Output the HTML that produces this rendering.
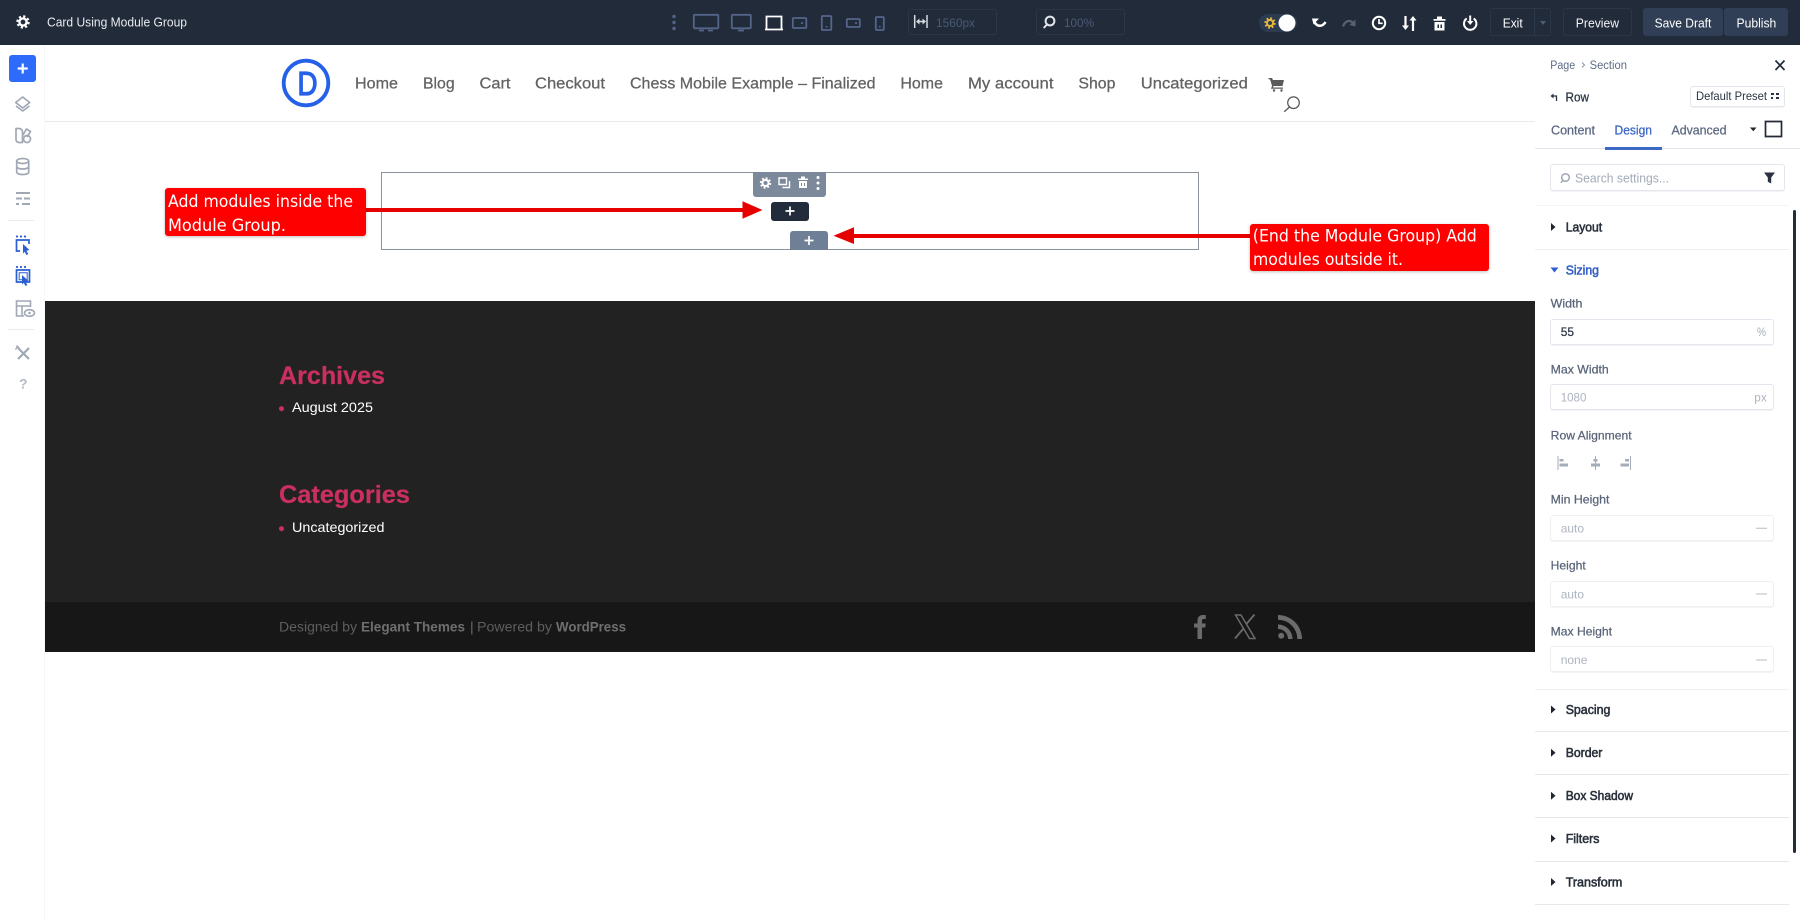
<!DOCTYPE html>
<html lang="en"><head><meta charset="utf-8"><title>Card Using Module Group</title>
<style>
html,body{margin:0;padding:0;width:1800px;height:920px;overflow:hidden;background:#fff;font-family:"Liberation Sans",sans-serif}
.b{position:absolute;box-sizing:border-box}
svg{position:absolute;left:0;top:0}
text{font-family:"Liberation Sans",sans-serif}
.m{stroke:currentColor;stroke-width:.25}
.s{stroke:currentColor;stroke-width:.55}
.inp{background:#fff;border:1px solid #e3e7ed;border-radius:3px;box-shadow:0 1px 1px rgba(30,40,60,.06)}
.lt{border-color:#eef0f3}
.dv{background:#e5e8ec;height:1px;left:1535px;width:254px}
.red{background:#f00;border-radius:3px;box-shadow:0 1px 3px rgba(0,0,0,.25)}
</style></head><body>
<div class="b" style="left:0;top:0;width:1800px;height:45px;background:#212b39"></div>
<div class="b" style="left:45px;top:121px;width:1491px;height:1px;background:#e9e9ea"></div>
<div class="b" style="left:44px;top:45px;width:1px;height:875px;background:#f6f7f8"></div>
<div class="b" style="left:45px;top:301px;width:1491px;height:301px;background:#222223"></div>
<div class="b" style="left:45px;top:602px;width:1491px;height:50px;background:#171717"></div>

<div class="b" style="left:908px;top:9px;width:89px;height:26px;border:1px solid #2b3747;border-radius:3px"></div>
<div class="b" style="left:1036px;top:9px;width:89px;height:26px;border:1px solid #2b3747;border-radius:3px"></div>
<div class="b" style="left:1259px;top:14px;width:38px;height:18px;border-radius:9px;background:#2d3b50"></div>
<div class="b" style="left:1490px;top:8px;width:61px;height:28px;border:1px solid #2b3747;border-radius:3px"></div>
<div class="b" style="left:1534px;top:8px;width:1px;height:28px;background:#2e3a4b"></div>
<div class="b" style="left:1563px;top:8px;width:69px;height:28px;border:1px solid #2b3747;border-radius:3px"></div>
<div class="b" style="left:1643px;top:8px;width:80px;height:28px;background:#303f55;border-radius:3px"></div>
<div class="b" style="left:1724px;top:8px;width:64px;height:28px;background:#303f55;border-radius:3px"></div>

<div class="b" style="left:9px;top:55px;width:27px;height:27px;background:#2f6bfb;border-radius:3px"></div>
<div class="b" style="left:8px;top:220px;width:26px;height:1px;background:#e8eaed"></div>
<div class="b" style="left:8px;top:329px;width:26px;height:1px;background:#e8eaed"></div>

<div class="b" style="left:381px;top:172px;width:818px;height:78px;border:1.5px solid #8b9299"></div>
<div class="b" style="left:753px;top:172px;width:73px;height:25px;background:#7b899b;border-radius:0 0 3px 3px"></div>
<div class="b" style="left:771px;top:202px;width:38px;height:19px;background:#222c3a;border-radius:3px"></div>
<div class="b" style="left:790px;top:231px;width:38px;height:19px;background:#6f7f95;border-radius:3px 3px 0 0"></div>
<div class="b" style="left:366px;top:208px;width:377px;height:4px;background:#e60000"></div>
<div class="b" style="left:853px;top:234px;width:398px;height:4px;background:#e60000"></div>
<div class="b red" style="left:165px;top:188px;width:201px;height:48px"></div>
<div class="b red" style="left:1250px;top:224px;width:239px;height:47px"></div>

<div class="b" style="left:1535px;top:45px;width:265px;height:875px;background:#fff"></div>
<div class="b" style="left:1535px;top:148px;width:265px;height:1px;background:#e2e6ec"></div>
<div class="b" style="left:1605px;top:147px;width:57px;height:2.500px;background:#3c68c6"></div>
<div class="b inp" style="left:1690px;top:86px;width:95px;height:21px"></div>
<div class="b inp" style="left:1550px;top:164px;width:235px;height:27px"></div>
<div class="b" style="left:1535px;top:205px;width:254px;height:1px;background:#f3f4f6"></div>
<div class="b dv" style="top:249px;background:#eceef1"></div>
<div class="b dv" style="top:689px;background:#f0f1f3"></div>
<div class="b dv" style="top:731px"></div>
<div class="b dv" style="top:774px"></div>
<div class="b dv" style="top:817px"></div>
<div class="b dv" style="top:861px"></div>
<div class="b dv" style="top:904px"></div>
<div class="b" style="left:1793px;top:210px;width:3px;height:643px;background:#232d3b;border-radius:2px"></div>
<div class="b inp" style="left:1550px;top:319px;width:224px;height:26px"></div>
<div class="b inp" style="left:1550px;top:384px;width:224px;height:26px"></div>
<div class="b inp lt" style="left:1550px;top:515px;width:224px;height:26px"></div>
<div class="b inp lt" style="left:1550px;top:581px;width:224px;height:26px"></div>
<div class="b inp lt" style="left:1550px;top:646px;width:224px;height:26px"></div>

<svg width="1800" height="920" viewBox="0 0 1800 920" xmlns="http://www.w3.org/2000/svg">
<defs>
<g id="gear"><circle r="3.6" fill="none" stroke="currentColor" stroke-width="2.4"/><circle r="5.6" fill="none" stroke="currentColor" stroke-width="2.2" stroke-dasharray="2.2 2.2"/></g>
<path id="tr" d="M0-4 4.500 0 0 4z" fill="#20262f"/>
</defs>

<!-- top bar -->
<use href="#gear" x="23" y="22" color="#fff"/>
<text x="47" y="26.500" font-size="12.500" fill="#e8ebef" textLength="140" lengthAdjust="spacingAndGlyphs">Card Using Module Group</text>
<g fill="#55658a"><circle cx="674" cy="16.500" r="1.700"/><circle cx="674" cy="22.500" r="1.700"/><circle cx="674" cy="28.500" r="1.700"/></g>
<g fill="none" stroke="#55658a" stroke-width="1.800">
<rect x="693.800" y="14.800" width="24.500" height="13.500" rx="1"/><path d="M699 30.500h5M708 30.500h5"/>
<rect x="731.800" y="14.800" width="19" height="13.500" rx="1"/><path d="M738 30.500h6"/>
<rect x="792.800" y="18" width="13.500" height="10" rx="1"/><path d="M802 22v2"/>
<rect x="821.800" y="16" width="9.500" height="14" rx="1"/><path d="M826.500 26v1.500"/>
<rect x="846.800" y="19" width="13" height="8" rx="1"/><path d="M856 22v2"/>
<rect x="875.800" y="17" width="8" height="13" rx="1"/><path d="M879.700 26v1.500"/>
</g>
<path d="M766.500 16.500h15v13h-15zM765 29.500h18" fill="none" stroke="#fff" stroke-width="1.800"/>
<g fill="none" stroke="#d5dae2" stroke-width="1.500"><path d="M914.700 15v13M927 15v13"/><path d="M917 21.500h8"/></g><path d="M916 21.500l3.500-3v6zM926 21.500l-3.500-3v6z" fill="#d5dae2"/>
<text x="936" y="27" font-size="12" fill="#4b5a75" textLength="39" lengthAdjust="spacingAndGlyphs">1560px</text>
<circle cx="1050" cy="21" r="4.400" fill="none" stroke="#e2e5ea" stroke-width="2"/><path d="M1047 24.500l-3.300 3.500" stroke="#e2e5ea" stroke-width="2"/>
<text x="1064" y="27" font-size="12" fill="#4b5a75" textLength="30" lengthAdjust="spacingAndGlyphs">100%</text>
<use href="#gear" transform="translate(1270 23) scale(.85)" color="#e5b73d"/>
<circle cx="1287" cy="23" r="8.500" fill="#fff"/>
<path d="M1314 21.500c2 3.500 4.500 5 7.500 4 1.800-.6 3-1.800 4-3.500" fill="none" stroke="#fff" stroke-width="2.500"/><path d="M1312 18.500h7l-5.500 6z" fill="#fff"/>
<path d="M1343 26.500c1-3.500 3.500-5.500 6-5.500 2.200 0 3.500 1 5 3" fill="none" stroke="#566273" stroke-width="2.300"/><path d="M1355.500 19.500v7l-6-1.500z" fill="#566273"/>
<circle cx="1379" cy="23" r="6.200" fill="none" stroke="#fff" stroke-width="2"/><path d="M1379 19v4.300h3.700" fill="none" stroke="#fff" stroke-width="1.700"/>
<path d="M1405.500 16v11M1413 19v12" stroke="#fff" stroke-width="2.200"/><path d="M1402 25.500h7l-3.500 4.500zM1409.500 20.500h7l-3.500-4.500z" fill="#fff"/>
<path d="M1433.500 19h12v1.800h-12zM1437 16.500h5v2.500h-5zM1434.500 22h10v8.500h-10z" fill="#fff"/><path d="M1437.500 24.500h1.500v3.500h-1.500zM1440.500 24.500h1.500v3.500h-1.500z" fill="#212b39"/>
<path d="M1466.700 18.500a6.200 6.200 0 1 0 7 0" fill="none" stroke="#fff" stroke-width="2"/><path d="M1470.200 15.500v7" stroke="#fff" stroke-width="2"/><path d="M1467 21h6.400l-3.200 4z" fill="#fff"/>
<text x="1502.700" y="27.500" font-size="12.500" fill="#fff" textLength="20" lengthAdjust="spacingAndGlyphs">Exit</text>
<path d="M1540 21h6l-3 4z" fill="#4d5d75"/>
<text x="1575.800" y="27.500" font-size="12.500" fill="#f2f4f7" textLength="43.200" lengthAdjust="spacingAndGlyphs">Preview</text>
<text x="1654.600" y="27.500" font-size="12.500" fill="#fff" textLength="56.700" lengthAdjust="spacingAndGlyphs">Save Draft</text>
<text x="1736.500" y="27.500" font-size="12.500" fill="#fff" textLength="39.800" lengthAdjust="spacingAndGlyphs">Publish</text>

<!-- sidebar -->
<path d="M22.700 63.500v10M17.700 68.500h10" stroke="#fff" stroke-width="2.200"/>
<g fill="none" stroke="#a0a8b5" stroke-width="1.700" stroke-linejoin="round">
<path d="M22.700 97l7 5.500-7 5.500-7-5.500z"/><path d="M16 106l6.700 5 6.700-5"/>
<path d="M16 128.500h3a3.500 3.500 0 0 1 3.500 3.500v10.500h-3.500a3 3 0 0 1-3-3z"/><path d="M23 135l3.500-6 4 2.500-3.500 5.500"/><circle cx="27" cy="139" r="3.500"/>
<ellipse cx="22.700" cy="161" rx="6" ry="2.500"/><path d="M16.700 161v11c0 1.500 2.700 2.500 6 2.500s6-1 6-2.500v-11M16.700 166.500c0 1.500 2.700 2.500 6 2.500s6-1 6-2.500"/>
</g>
<g stroke="#a0a8b5" stroke-width="1.900"><path d="M16 193h14M16 198.500h6M24 198.500h6M16 204h3M22 204h8"/></g>
<g fill="none" stroke="#2b5fd0" stroke-width="1.700">
<path d="M24 240h-7.500v11h3.500M24 240h5v4"/>
<path d="M16.500 270h13v12h-13z" stroke-width="1.700"/><path d="M19.200 272.700h8v7h-8z" stroke-width="1"/>
</g>
<g fill="#2b5fd0"><circle cx="17" cy="236.500" r="1.100"/><circle cx="21" cy="236.500" r="1.100"/><circle cx="25" cy="236.500" r="1.100"/><path d="M23 244l6.500 6-3 .8 1.800 3.200-1.800 1-1.800-3.200-1.700 1.700z"/>
<circle cx="17" cy="267" r="1.100"/><circle cx="21" cy="267" r="1.100"/><circle cx="25" cy="267" r="1.100"/><path d="M22 275l6.500 6-3 .8 1.800 3.200-1.800 1-1.800-3.200-1.700 1.700z"/></g>
<g fill="none" stroke="#a0a8b5" stroke-width="1.600"><path d="M24 316h-7.500v-15h14v6M16.500 306h14M22 306v10"/><ellipse cx="29.500" cy="313" rx="5" ry="3.300"/></g><circle cx="29.500" cy="313" r="1.300" fill="#a0a8b5"/>
<g fill="none" stroke="#a0a8b5"><path d="M18 348l11 11" stroke-width="2.200"/><path d="M29 348l-11 11" stroke-width="2.200"/><path d="M15.500 349.500l2-3M16.500 345.500l3 3" stroke-width="1.500"/></g>
<text x="19" y="388.500" font-size="14" font-weight="700" fill="#b3bac5">?</text>

<!-- site header -->
<circle cx="306" cy="83" r="22.300" fill="none" stroke="#2461e8" stroke-width="3.800"/>
<text x="297.500" y="95" font-size="33" fill="#2461e8" style="stroke:#2461e8;stroke-width:1.300" textLength="20" lengthAdjust="spacingAndGlyphs">D</text>
<g font-size="15.500" fill="#626262" class="m" color="#626262">
<text x="355" y="88.500" textLength="43" lengthAdjust="spacingAndGlyphs">Home</text>
<text x="423" y="88.500" textLength="31.600" lengthAdjust="spacingAndGlyphs">Blog</text>
<text x="479.500" y="88.500" textLength="31" lengthAdjust="spacingAndGlyphs">Cart</text>
<text x="535" y="88.500" textLength="70" lengthAdjust="spacingAndGlyphs">Checkout</text>
<text x="630" y="88.500" textLength="245.500" lengthAdjust="spacingAndGlyphs">Chess Mobile Example – Finalized</text>
<text x="900.400" y="88.500" textLength="42.600" lengthAdjust="spacingAndGlyphs">Home</text>
<text x="968" y="88.500" textLength="85.500" lengthAdjust="spacingAndGlyphs">My account</text>
<text x="1078.400" y="88.500" textLength="37" lengthAdjust="spacingAndGlyphs">Shop</text>
<text x="1140.800" y="88.500" textLength="107" lengthAdjust="spacingAndGlyphs">Uncategorized</text>
</g>
<path d="M1269 78h3l1 2h11l-1.500 6h-9l-.5 1.500h10v1.300h-12l1-3-2-6.500h-2z" fill="#5a5a5a"/><circle cx="1274" cy="90.500" r="1.200" fill="#5a5a5a"/><circle cx="1281.500" cy="90.500" r="1.200" fill="#5a5a5a"/>
<circle cx="1293.500" cy="102.700" r="5.800" fill="none" stroke="#555" stroke-width="1.200"/><path d="M1289.500 107l-5.300 4.800" stroke="#555" stroke-width="1.300"/>

<!-- module group -->
<use href="#gear" transform="translate(765.500 183) scale(.85)" color="#fff"/>
<path d="M779 178h7.500v6.500h-7.500z" fill="none" stroke="#fff" stroke-width="1.400"/><path d="M789.500 181v6.500h-7" fill="none" stroke="#fff" stroke-width="1.400"/>
<path d="M798 178.500h10v1.500h-10zM801 176.500h4v2h-4zM799 181h8v7h-8z" fill="#fff"/><path d="M801 183h1v3h-1zM804 183h1v3h-1z" fill="#7b899b"/>
<g fill="#fff"><circle cx="818" cy="177.500" r="1.500"/><circle cx="818" cy="183" r="1.500"/><circle cx="818" cy="188.500" r="1.500"/></g>
<path d="M790 206.500v9M785.500 211h9" stroke="#fff" stroke-width="1.700"/>
<path d="M809 236v9M804.500 240.500h9" stroke="#fff" stroke-width="1.700"/>
<path d="M742.500 201.300l20 8.700-20 8.700z" fill="#e60000"/>
<path d="M854 227.300l-20.500 8.400 20.500 8.300z" fill="#e60000"/>
<g font-size="17" fill="#fff">
<text x="168" y="207" style="font-family:'DejaVu Sans',sans-serif" textLength="185" lengthAdjust="spacingAndGlyphs">Add modules inside the</text>
<text x="168" y="231" style="font-family:'DejaVu Sans',sans-serif" textLength="118" lengthAdjust="spacingAndGlyphs">Module Group.</text>
<text x="1252.800" y="241.500" style="font-family:'DejaVu Sans',sans-serif" textLength="224" lengthAdjust="spacingAndGlyphs">(End the Module Group) Add</text>
<text x="1253" y="265" style="font-family:'DejaVu Sans',sans-serif" textLength="150" lengthAdjust="spacingAndGlyphs">modules outside it.</text>
</g>

<!-- footer -->
<text x="279" y="384" font-size="25" font-weight="700" fill="#c92f5f" class="m" color="#c92f5f" textLength="106" lengthAdjust="spacingAndGlyphs">Archives</text>
<circle cx="281.500" cy="408.700" r="2.500" fill="#c92f5f"/>
<text x="292" y="412" font-size="14" fill="#fff" textLength="81" lengthAdjust="spacingAndGlyphs">August 2025</text>
<text x="279" y="503" font-size="25" font-weight="700" fill="#c92f5f" class="m" color="#c92f5f" textLength="131" lengthAdjust="spacingAndGlyphs">Categories</text>
<circle cx="281.500" cy="528.700" r="2.500" fill="#c92f5f"/>
<text x="292" y="532" font-size="14" fill="#fff" textLength="92.500" lengthAdjust="spacingAndGlyphs">Uncategorized</text>
<g font-size="14">
<text x="279" y="631.500" fill="#5e5e5e" textLength="78" lengthAdjust="spacingAndGlyphs">Designed by</text>
<text x="361" y="631.500" fill="#6f6f6f" font-weight="700" textLength="104" lengthAdjust="spacingAndGlyphs">Elegant Themes</text>
<text x="470" y="631.500" fill="#6a6a6a">|</text>
<text x="477" y="631.500" fill="#5e5e5e" textLength="75" lengthAdjust="spacingAndGlyphs">Powered by</text>
<text x="556" y="631.500" fill="#6f6f6f" font-weight="700" textLength="70" lengthAdjust="spacingAndGlyphs">WordPress</text>
</g>
<path d="M1197.500 639v-11.500h-3.500v-4h3.500v-3c0-3.500 2-5.500 5.300-5.500h3v4h-2c-1.300 0-1.800.6-1.800 1.900v2.600h3.800l-.6 4h-3.200v11.500z" fill="#6b6b6b"/>
<g fill="none" stroke="#6b6b6b"><path d="M1235.500 615h5.500l14 23.500h-5.500z" stroke-width="1.500"/><path d="M1254.500 614.500l-8.500 10M1243.500 628.500l-8.500 10" stroke-width="1.800"/></g>
<circle cx="1281.200" cy="635.800" r="3" fill="#6b6b6b"/>
<path d="M1278 624.500a14.500 14.500 0 0 1 14.500 14.500h-4.500a10 10 0 0 0-10-10zM1278 615a24 24 0 0 1 24 24h-4.700a19.300 19.300 0 0 0-19.300-19.300z" fill="#6b6b6b"/>

<!-- panel -->
<g font-size="11.500" fill="#5f6d85">
<text x="1550.200" y="69" textLength="25" lengthAdjust="spacingAndGlyphs">Page</text>
<text x="1589.600" y="69" textLength="37.400" lengthAdjust="spacingAndGlyphs">Section</text>
</g>
<path d="M1582 62.500l2.500 2.500-2.500 2.500" fill="none" stroke="#8a95a8"/>
<path d="M1775.500 60.500l9 9.500M1784.500 60.500l-9 9.500" stroke="#232c3a" stroke-width="1.700"/>
<path d="M1556.500 101v-5h-5" fill="none" stroke="#2a3443" stroke-width="1.300"/><path d="M1553.500 93.500v5l-3-2.500z" fill="#2a3443"/>
<text x="1565.500" y="101.500" font-size="12.500" fill="#2a3443" class="m" color="#2a3443" textLength="23.500" lengthAdjust="spacingAndGlyphs">Row</text>
<text x="1696" y="100" font-size="12" fill="#2a3443" textLength="71" lengthAdjust="spacingAndGlyphs">Default Preset</text>
<g fill="#2a3443"><rect x="1771" y="93" width="3" height="2"/><rect x="1776" y="93" width="3" height="2"/><rect x="1771" y="97" width="2" height="2"/><rect x="1776" y="97" width="3" height="2"/></g>
<g font-size="12.500">
<text x="1551" y="134.500" fill="#5b6880" class="m" color="#5b6880" textLength="44" lengthAdjust="spacingAndGlyphs">Content</text>
<text x="1614.500" y="134.500" fill="#3b66c4" class="m" color="#3b66c4" textLength="37.500" lengthAdjust="spacingAndGlyphs">Design</text>
<text x="1671.500" y="134.500" fill="#5b6880" class="m" color="#5b6880" textLength="55" lengthAdjust="spacingAndGlyphs">Advanced</text>
</g>
<path d="M1750 127.500h6.500l-3.200 3.700z" fill="#20262f"/>
<path d="M1765.500 121.500h16v15h-16z" fill="none" stroke="#222a36" stroke-width="1.700"/>
<circle cx="1565.500" cy="177.500" r="3.800" fill="none" stroke="#a0a8b5" stroke-width="1.500"/><path d="M1562.800 180.500l-2 2.300" stroke="#a0a8b5" stroke-width="1.500"/>
<text x="1575" y="182.500" font-size="12.500" fill="#a3abb8" textLength="94" lengthAdjust="spacingAndGlyphs">Search settings...</text>
<path d="M1764 172.500h11l-3.800 5v6l-3.400-1.700v-4.300z" fill="#2a3240"/>

<g font-size="12.500" fill="#2a303b" class="s" color="#2a303b">
<text x="1565.700" y="231.500" textLength="36.500" lengthAdjust="spacingAndGlyphs">Layout</text>
<text x="1565.700" y="714" textLength="44.700" lengthAdjust="spacingAndGlyphs">Spacing</text>
<text x="1565.700" y="757" textLength="36.700" lengthAdjust="spacingAndGlyphs">Border</text>
<text x="1565.700" y="800" textLength="67.300" lengthAdjust="spacingAndGlyphs">Box Shadow</text>
<text x="1565.700" y="843" textLength="33.700" lengthAdjust="spacingAndGlyphs">Filters</text>
<text x="1565.700" y="886.500" textLength="56.700" lengthAdjust="spacingAndGlyphs">Transform</text>
</g>
<text x="1565.700" y="274.500" font-size="12.500" fill="#3561c4" class="s" color="#3561c4" textLength="33.300" lengthAdjust="spacingAndGlyphs">Sizing</text>
<use href="#tr" x="1551" y="227"/><use href="#tr" x="1551" y="709.500"/><use href="#tr" x="1551" y="752.700"/><use href="#tr" x="1551" y="795.700"/><use href="#tr" x="1551" y="838.500"/><use href="#tr" x="1551" y="882"/>
<path d="M1550.500 267.500h8l-4 5z" fill="#2f5fd0"/>
<g font-size="12" fill="#5a6579" class="m" color="#5a6579">
<text x="1550.700" y="307.300" textLength="31.700" lengthAdjust="spacingAndGlyphs">Width</text>
<text x="1550.700" y="373.300" textLength="58" lengthAdjust="spacingAndGlyphs">Max Width</text>
<text x="1550.700" y="439.300" textLength="81" lengthAdjust="spacingAndGlyphs">Row Alignment</text>
<text x="1550.700" y="503.600" textLength="58.700" lengthAdjust="spacingAndGlyphs">Min Height</text>
<text x="1550.700" y="569.600" textLength="35" lengthAdjust="spacingAndGlyphs">Height</text>
<text x="1550.700" y="635.300" textLength="61.300" lengthAdjust="spacingAndGlyphs">Max Height</text>
</g>
<text x="1560.700" y="336" font-size="12" fill="#2f3846" class="m" color="#2f3846" textLength="13.300" lengthAdjust="spacingAndGlyphs">55</text>
<text x="1757" y="336" font-size="12" fill="#a3abb8" textLength="9" lengthAdjust="spacingAndGlyphs">%</text>
<g font-size="12" fill="#adb4c0">
<text x="1560.700" y="401.500" textLength="25.700" lengthAdjust="spacingAndGlyphs">1080</text>
<text x="1754.300" y="401.500" textLength="12.400" lengthAdjust="spacingAndGlyphs">px</text>
<text x="1560.700" y="532.500" textLength="23.300" lengthAdjust="spacingAndGlyphs">auto</text>
<text x="1560.700" y="598.500" textLength="23.300" lengthAdjust="spacingAndGlyphs">auto</text>
<text x="1560.700" y="664" textLength="26.700" lengthAdjust="spacingAndGlyphs">none</text>
</g>
<path d="M1756 528.300h11M1756 594h11M1756 660h11" stroke="#b6bcc7" stroke-width="1"/>
<g fill="#a5adba">
<rect x="1557.500" y="456" width="1" height="14"/><rect x="1559.500" y="459" width="4" height="2.500"/><rect x="1559.500" y="463.500" width="8.500" height="3"/>
<rect x="1595" y="456" width="1" height="14"/><rect x="1593.500" y="459" width="4" height="2.500"/><rect x="1591" y="463.500" width="9" height="3"/>
<rect x="1630" y="456" width="1" height="14"/><rect x="1625" y="459" width="4" height="2.500"/><rect x="1620.500" y="463.500" width="8.500" height="3"/>
</g>
</svg>
</body></html>
